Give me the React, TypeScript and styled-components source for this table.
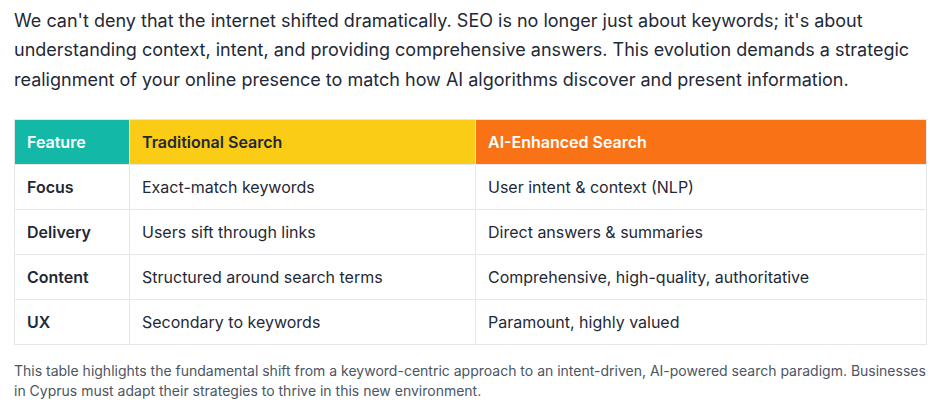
import React from "react";
import styled, { createGlobalStyle } from "styled-components";

const Global = createGlobalStyle`
  *, *::before, *::after { box-sizing: border-box; }
  html, body { margin: 0; padding: 0; background: #ffffff; }
  body { font-family: Inter, "Noto Sans", Arial, sans-serif; -webkit-font-smoothing: antialiased; }
`;

const Page = styled.main`
  width: 926px;
  padding: 6px 0 0 14px;
  display: flex;
  flex-direction: column;
`;

const Lead = styled.p`
  margin: 0 0 25px;
  font-size: 18px;
  line-height: 29.25px;
  color: #1f2937;
`;

const Table = styled.table`
  width: 912px;
  border-collapse: collapse;
  table-layout: fixed;
  font-size: 16px;
  line-height: 20px;
  color: #1f2937;
`;

const HeadCell = styled.th<{ $bg: string; $fg: string; $w: number }>`
  width: ${(p) => p.$w}px;
  background: ${(p) => p.$bg};
  color: ${(p) => p.$fg};
  text-align: left;
  font-weight: 600;
  padding: 12px;
  border: 1px solid #e5e7eb;
`;

const Cell = styled.td<{ $strong?: boolean }>`
  padding: 12px;
  border: 1px solid #e5e7eb;
  font-weight: ${(p) => (p.$strong ? 600 : 400)};
`;

const Caption = styled.p`
  margin: 16px 0 0;
  font-size: 14px;
  line-height: 20px;
  color: #4b5563;
`;

const rows = [
  ["Focus", "Exact-match keywords", "User intent & context (NLP)"],
  ["Delivery", "Users sift through links", "Direct answers & summaries"],
  ["Content", "Structured around search terms", "Comprehensive, high-quality, authoritative"],
  ["UX", "Secondary to keywords", "Paramount, highly valued"],
];

export default function App() {
  return (
    <>
      <Global />
      <Page>
        <Lead>
          We can't deny that the internet shifted dramatically. SEO is no longer just about keywords; it's about
          understanding context, intent, and providing comprehensive answers. This evolution demands a strategic
          realignment of your online presence to match how AI algorithms discover and present information.
        </Lead>
        <Table>
          <thead>
            <tr>
              <HeadCell $bg="#14b8a6" $fg="#ffffff" $w={115}>Feature</HeadCell>
              <HeadCell $bg="#facc15" $fg="#1f2937" $w={346}>Traditional Search</HeadCell>
              <HeadCell $bg="#f97316" $fg="#ffffff" $w={451}>AI-Enhanced Search</HeadCell>
            </tr>
          </thead>
          <tbody>
            {rows.map((r) => (
              <tr key={r[0]}>
                <Cell $strong>{r[0]}</Cell>
                <Cell>{r[1]}</Cell>
                <Cell>{r[2]}</Cell>
              </tr>
            ))}
          </tbody>
        </Table>
        <Caption>
          This table highlights the fundamental shift from a keyword-centric approach to an intent-driven, AI-powered
          search paradigm. Businesses in Cyprus must adapt their strategies to thrive in this new environment.
        </Caption>
      </Page>
    </>
  );
}
